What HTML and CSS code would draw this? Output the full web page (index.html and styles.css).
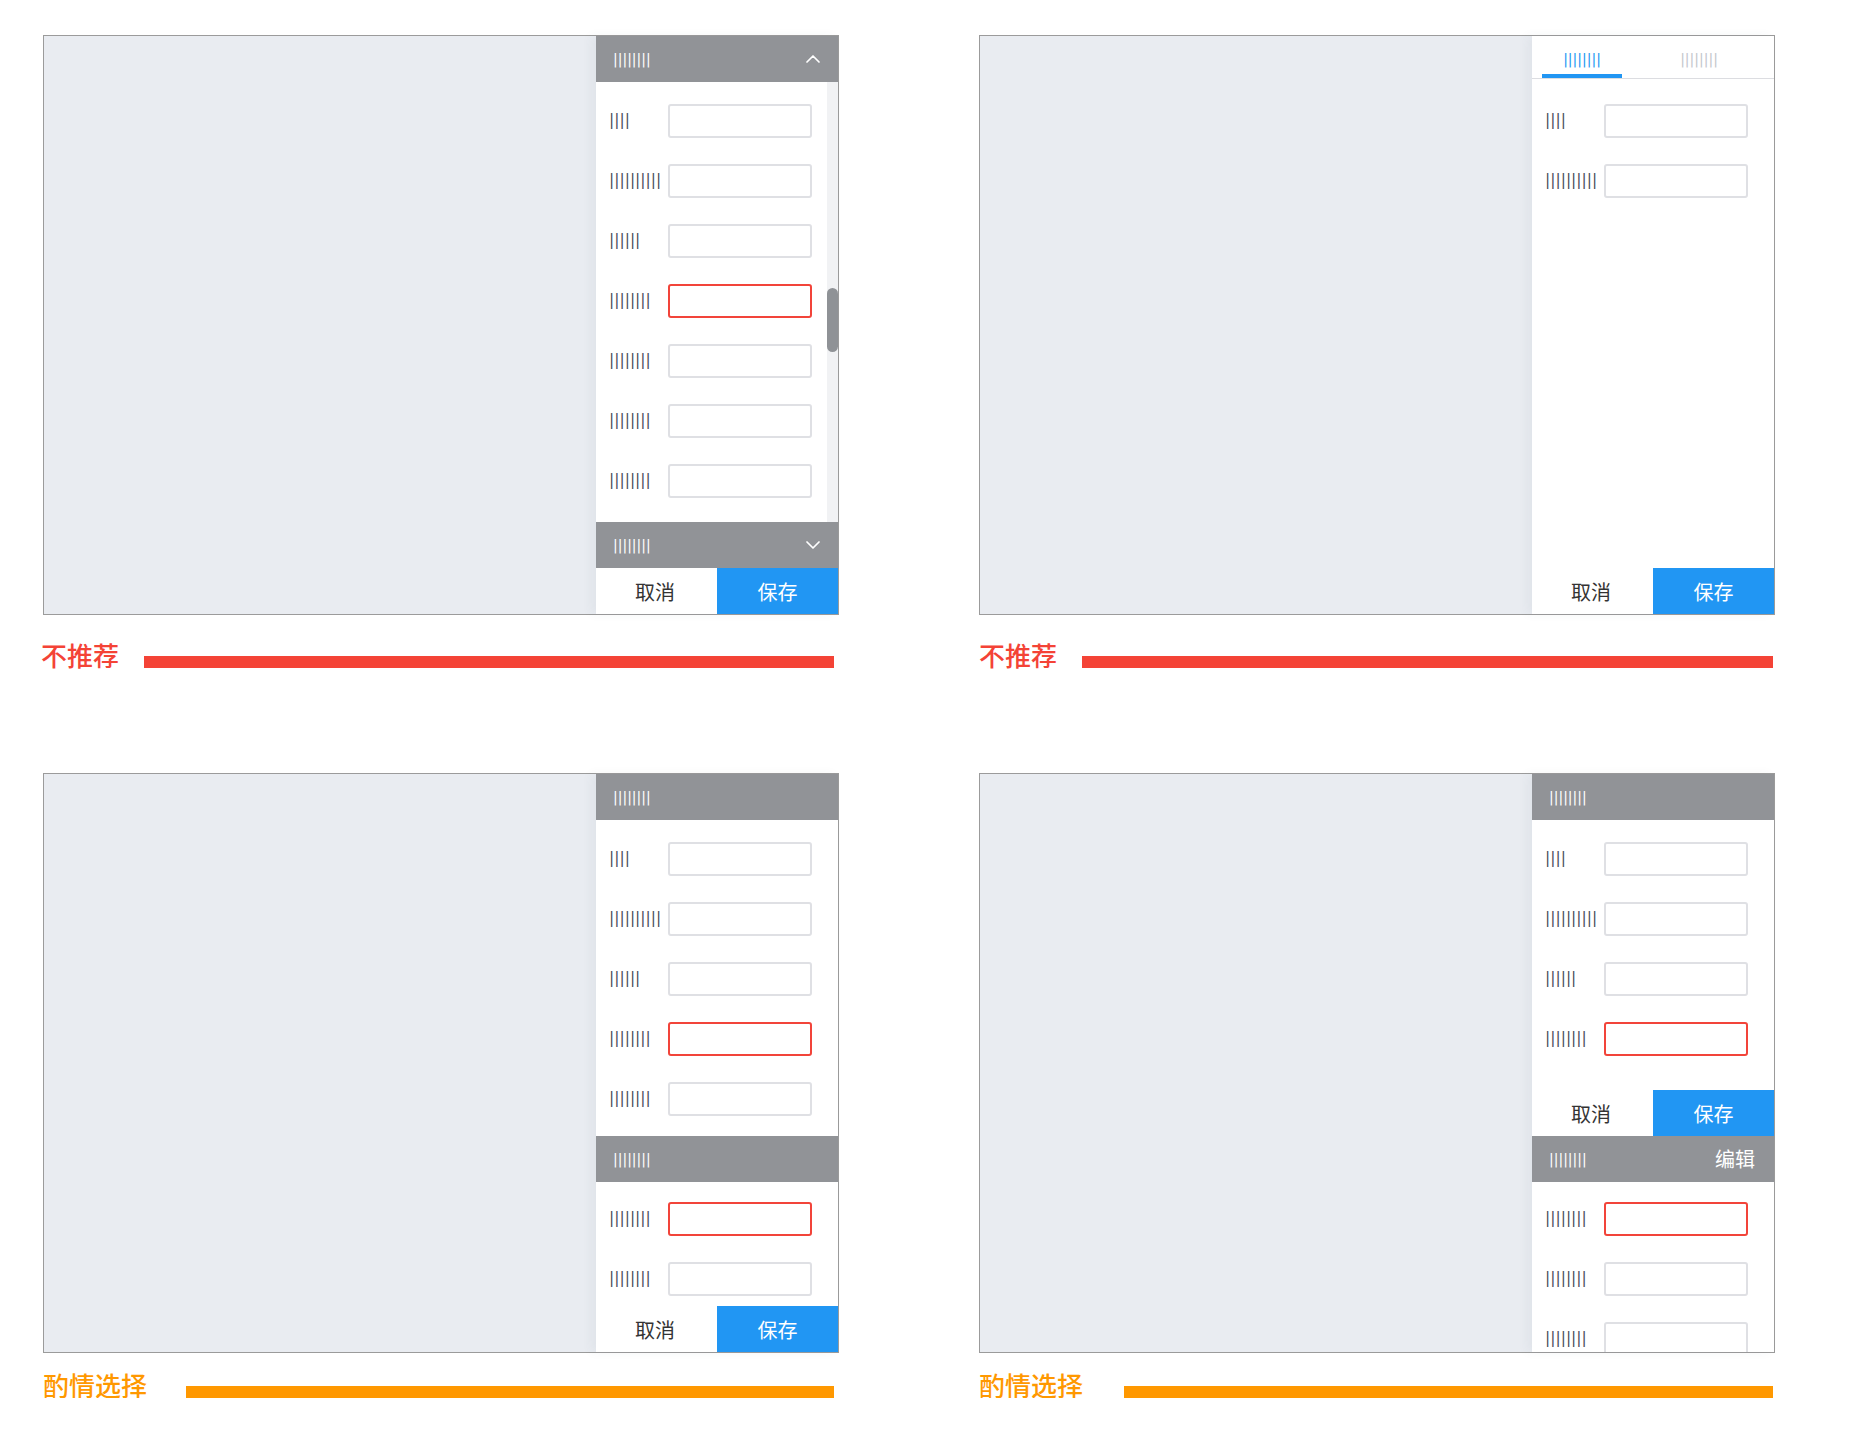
FILE: index.html
```html
<!DOCTYPE html>
<html lang="zh">
<head>
<meta charset="utf-8">
<title>Sidebar form patterns</title>
<link rel="stylesheet" href="styles.css">
</head>
<body>
<div class="grid">

  <!-- Panel 1 -->
  <div class="cell">
    <div class="panel">
      <div class="canvas"></div>
      <div class="side">
        <div class="head">
          <span class="bars-h">||||||||</span>
          <svg class="chev" width="14" height="8" viewBox="0 0 14 8"><polyline points="1,7 7,1 13,7"/></svg>
        </div>
        <div class="scroll-body">
          <div class="form-col">
            <div class="row"><span class="lab">||||</span><span class="inp"></span></div>
            <div class="row"><span class="lab">||||||||||</span><span class="inp"></span></div>
            <div class="row"><span class="lab">||||||</span><span class="inp"></span></div>
            <div class="row"><span class="lab">||||||||</span><span class="inp err"></span></div>
            <div class="row"><span class="lab">||||||||</span><span class="inp"></span></div>
            <div class="row"><span class="lab">||||||||</span><span class="inp"></span></div>
            <div class="row"><span class="lab">||||||||</span><span class="inp"></span></div>
          </div>
          <div class="track"><div class="thumb"></div></div>
        </div>
        <div class="head">
          <span class="bars-h">||||||||</span>
          <svg class="chev" width="14" height="8" viewBox="0 0 14 8"><polyline points="1,1 7,7 13,1"/></svg>
        </div>
        <div class="btns"><div class="btn"><span class="btn-text">取消</span></div><div class="btn save"><span class="btn-text">保存</span></div></div>
      </div>
    </div>
    <div class="cap cap-red cap-left"><span class="cap-label">不推荐</span><span class="cap-bar"></span></div>
  </div>

  <!-- Panel 2 -->
  <div class="cell">
    <div class="panel">
      <div class="canvas"></div>
      <div class="side">
        <div class="tabbar">
          <span class="tab active">||||||||</span>
          <span class="tab">||||||||</span>
        </div>
        <div class="body tab-body">
          <div class="row"><span class="lab">||||</span><span class="inp"></span></div>
          <div class="row"><span class="lab">||||||||||</span><span class="inp"></span></div>
        </div>
        <div class="btns"><div class="btn"><span class="btn-text">取消</span></div><div class="btn save"><span class="btn-text">保存</span></div></div>
      </div>
    </div>
    <div class="cap cap-red cap-right"><span class="cap-label">不推荐</span><span class="cap-bar"></span></div>
  </div>

  <!-- Panel 3 -->
  <div class="cell">
    <div class="panel">
      <div class="canvas"></div>
      <div class="side">
        <div class="head"><span class="bars-h">||||||||</span></div>
        <div class="body">
          <div class="row"><span class="lab">||||</span><span class="inp"></span></div>
          <div class="row"><span class="lab">||||||||||</span><span class="inp"></span></div>
          <div class="row"><span class="lab">||||||</span><span class="inp"></span></div>
          <div class="row"><span class="lab">||||||||</span><span class="inp err"></span></div>
          <div class="row"><span class="lab">||||||||</span><span class="inp"></span></div>
        </div>
        <div class="head"><span class="bars-h">||||||||</span></div>
        <div class="body fill">
          <div class="row"><span class="lab">||||||||</span><span class="inp err"></span></div>
          <div class="row"><span class="lab">||||||||</span><span class="inp"></span></div>
        </div>
        <div class="btns"><div class="btn"><span class="btn-text">取消</span></div><div class="btn save"><span class="btn-text">保存</span></div></div>
      </div>
    </div>
    <div class="cap cap-orange cap-left"><span class="cap-label">酌情选择</span><span class="cap-bar"></span></div>
  </div>

  <!-- Panel 4 -->
  <div class="cell">
    <div class="panel">
      <div class="canvas"></div>
      <div class="side">
        <div class="head"><span class="bars-h">||||||||</span></div>
        <div class="body tall-bottom">
          <div class="row"><span class="lab">||||</span><span class="inp"></span></div>
          <div class="row"><span class="lab">||||||||||</span><span class="inp"></span></div>
          <div class="row"><span class="lab">||||||</span><span class="inp"></span></div>
          <div class="row"><span class="lab">||||||||</span><span class="inp err"></span></div>
        </div>
        <div class="btns static"><div class="btn"><span class="btn-text">取消</span></div><div class="btn save"><span class="btn-text">保存</span></div></div>
        <div class="head"><span class="bars-h">||||||||</span><span class="edit">编辑</span></div>
        <div class="body fill">
          <div class="row"><span class="lab">||||||||</span><span class="inp err"></span></div>
          <div class="row"><span class="lab">||||||||</span><span class="inp"></span></div>
          <div class="row"><span class="lab">||||||||</span><span class="inp"></span></div>
        </div>
      </div>
    </div>
    <div class="cap cap-orange cap-right"><span class="cap-label">酌情选择</span><span class="cap-bar"></span></div>
  </div>

</div>
</body>
</html>
```

FILE: styles.css
```css
html, body {
  margin: 0;
  background: #ffffff;
}

body {
  font-family: "Noto Sans CJK SC", "Noto Sans", sans-serif;
}

.grid {
  display: grid;
  grid-template-columns: 796px 796px;
  column-gap: 140px;
  row-gap: 105px;
  padding: 35px 0 0 43px;
}

.panel {
  height: 580px;
  box-sizing: border-box;
  border: 1px solid #9b9b9b;
  background: #e9ecf1;
  display: flex;
}

.canvas {
  flex: 1;
}

.side {
  width: 242px;
  flex: none;
  background: #ffffff;
  display: flex;
  flex-direction: column;
  box-shadow: -5px 0 10px rgba(60, 70, 90, 0.05);
  overflow: hidden;
}

.head {
  height: 46px;
  flex: none;
  background: #919397;
  display: flex;
  align-items: center;
  justify-content: space-between;
  padding: 0 18px 0 17px;
}

.bars-h {
  font: 14px/1 "DejaVu Sans", sans-serif;
  color: #ffffff;
}

.chev {
  display: block;
}

.chev polyline {
  fill: none;
  stroke: #ffffff;
  stroke-width: 1.7;
  stroke-linecap: round;
  stroke-linejoin: round;
}

.edit {
  font-size: 20px;
  line-height: 1;
  color: #ffffff;
  margin-right: 1px;
}

.scroll-body {
  flex: 1;
  min-height: 0;
  display: flex;
}

.form-col {
  flex: 1;
  padding-top: 9px;
  overflow: hidden;
}

.track {
  width: 11px;
  flex: none;
  background: #f1f2f4;
}

.thumb {
  margin-top: 206px;
  height: 64px;
  border-radius: 6px;
  background: #8f9296;
}

.body {
  flex: none;
  padding: 9px 0 7px;
}

.body.tall-bottom {
  padding-bottom: 21px;
}

.body.fill {
  flex: 1;
  min-height: 0;
  overflow: hidden;
  padding: 7px 0 0;
}

.body.tab-body {
  padding-top: 12px;
}

.row {
  height: 60px;
  display: flex;
  align-items: center;
  padding-left: 13px;
}

.lab {
  width: 59px;
  flex: none;
  font: 15.5px/1 "DejaVu Sans", sans-serif;
  color: #4b525e;
  white-space: nowrap;
}

.inp {
  width: 144px;
  height: 34px;
  flex: none;
  box-sizing: border-box;
  border: 2px solid #dfe0e4;
  border-radius: 3px;
  background: #ffffff;
}

.inp.err {
  border-color: #f2443a;
}

.btns {
  height: 46px;
  flex: none;
  display: flex;
  margin-top: auto;
}

.btns.static {
  margin-top: 0;
}

.btn {
  flex: 1 1 0;
  display: flex;
  align-items: center;
  justify-content: center;
  font-size: 20px;
  color: #333333;
  background: #ffffff;
}

.btn:first-child .btn-text {
  margin-right: 3px;
}

.btn.save {
  background: #2196f3;
  color: #ffffff;
}

.tabbar {
  height: 42px;
  flex: none;
  display: flex;
  gap: 37px;
  padding-left: 10px;
  border-bottom: 1px solid #dcdde1;
}

.tab {
  box-sizing: border-box;
  width: 80px;
  height: 42px;
  padding-top: 8px;
  display: flex;
  align-items: center;
  justify-content: center;
  border-bottom: 4px solid transparent;
  font: 14px/1 "DejaVu Sans", sans-serif;
  color: #c3c6cc;
}

.tab.active {
  color: #2196f3;
  border-bottom-color: #2196f3;
}

.cap {
  display: flex;
  align-items: flex-start;
}

.cap-label {
  font-size: 26px;
  line-height: 26px;
  font-weight: 500;
  white-space: nowrap;
}

.cap-bar {
  flex: 1;
  height: 12px;
}

.cap-red {
  margin-top: 27px;
}

.cap-red .cap-label {
  color: #f44336;
}

.cap-red .cap-bar {
  background: #f44336;
  margin-top: 14px;
  margin-left: 25px;
}

.cap-red.cap-left .cap-label {
  margin-left: -2px;
}

.cap-orange {
  margin-top: 19px;
}

.cap-orange .cap-label {
  color: #ff9800;
}

.cap-orange .cap-bar {
  background: #ff9800;
  margin-top: 14px;
  margin-left: 39px;
}

.cap-orange.cap-right .cap-bar {
  margin-left: 41px;
}

.cap-left .cap-bar {
  margin-right: 5px;
}

.cap-right .cap-bar {
  margin-right: 2px;
}
```
